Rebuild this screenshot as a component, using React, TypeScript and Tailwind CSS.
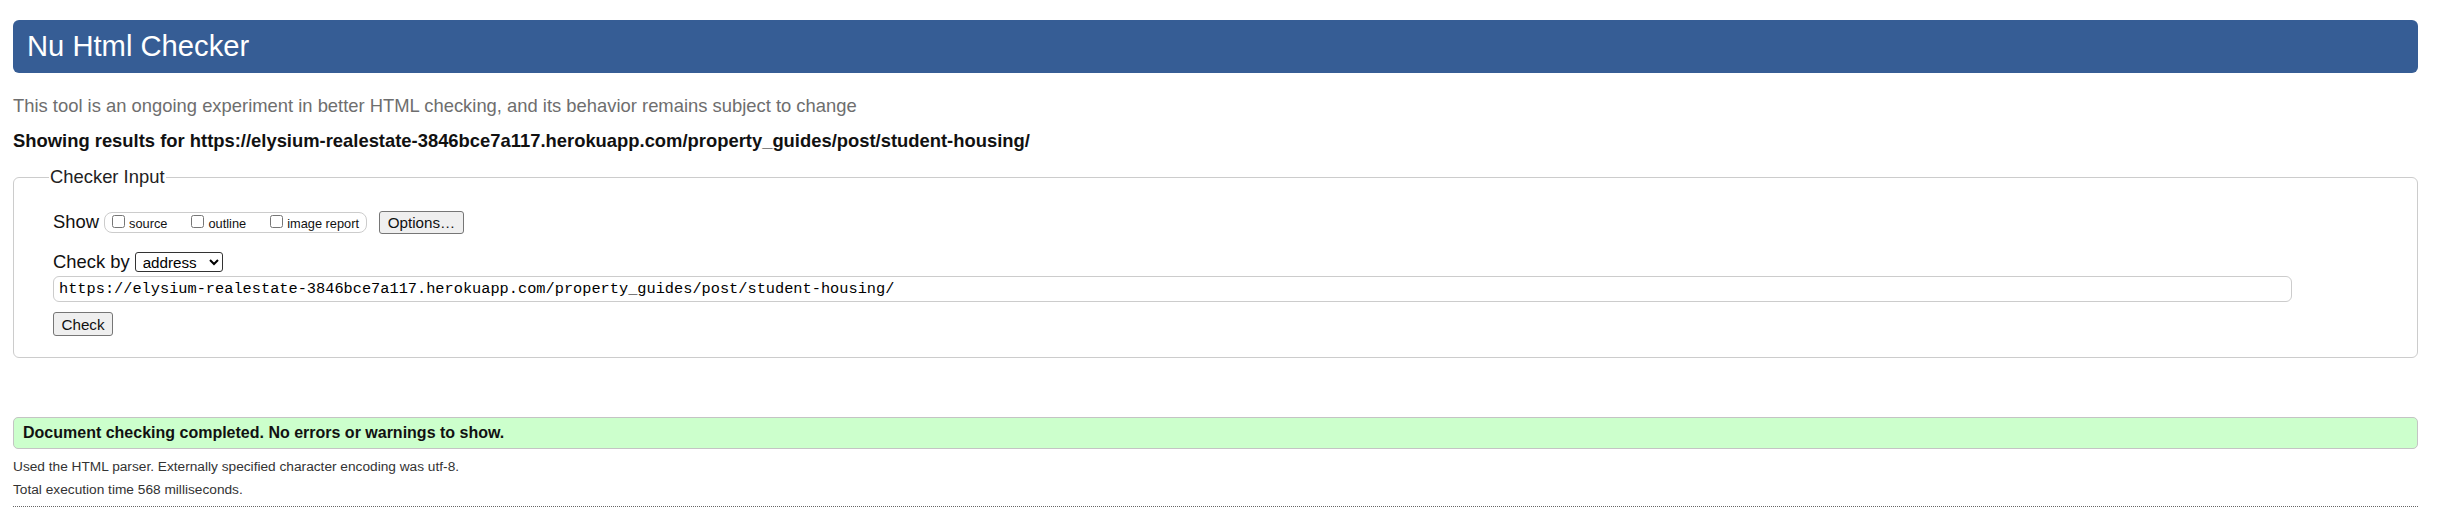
import React from 'react'

const targetUrl = 'https://elysium-realestate-3846bce7a117.herokuapp.com/property_guides/post/student-housing/'

const showOptions = ['source', 'outline', 'image report']

export default function App() {
  return (
    <div className="min-h-screen bg-white pl-[13px] pr-[19px] pt-[20px] font-['Liberation_Sans',Arial,sans-serif] text-[#111]">
      {/* Title bar */}
      <h1 className="flex h-[53px] items-center rounded-[6px] bg-[#365d95] px-[14px] text-[29.2px] font-normal leading-none text-white">
        Nu Html Checker
      </h1>

      <p className="mt-[22px] text-[18.4px] leading-[22px] text-[#6e6e6e]">
        This tool is an ongoing experiment in better HTML checking, and its behavior remains subject to change
      </p>
      <p className="mt-[13px] text-[18.4px] font-bold leading-[22px] text-[#111]">
        Showing results for {targetUrl}
      </p>

      {/* Checker input */}
      <fieldset className="mt-[15px] rounded-[6px] border border-[#cccccc] pb-[21px] pl-[35px]">
        <legend className="px-[1px] text-[18.4px] leading-[20px] text-[#222]">Checker Input</legend>
        <div className="pl-[4px] pr-[125px]">
          <div className="mt-[24px] flex items-center text-[18.4px] leading-[20px]">
            <span className="mb-[2px]">Show</span>
            <span className="ml-[5px] flex h-[21px] items-center rounded-[8px] border border-[#cccccc] pl-[7px] pr-[7px] text-[12.8px] leading-[14px]">
              {showOptions.map((opt, i) => (
                <label key={opt} className={i === 0 ? 'flex items-center' : 'ml-[24px] flex items-center'}>
                  <input type="checkbox" className="m-0 mb-[3px] mr-[4px] h-[13px] w-[13px]" />
                  <span className="mt-[2px]">{opt}</span>
                </label>
              ))}
            </span>
            <button className="ml-[12px] h-[23px] w-[85px] rounded-[3px] border border-[#767676] bg-[#efefef] text-[15.2px] leading-[17px]">
              Options…
            </button>
          </div>

          <div className="mt-[18px] flex items-baseline text-[18.4px] leading-[20px]">
            <span>Check by</span>
            <select className="ml-[5px] h-[20px] w-[88px] rounded-[3px] border border-[#333] bg-white pl-[3px] text-[15.2px] leading-[17px] text-black">
              <option>address</option>
            </select>
          </div>

          <input
            type="text"
            readOnly
            value={targetUrl}
            className="mt-[4px] block h-[26px] w-full rounded-[6px] border border-[#cccccc] px-[5px] font-['Liberation_Mono','Courier_New',monospace] text-[15.3px] text-black"
          />

          <button className="mt-[10px] block h-[24px] w-[60px] rounded-[3px] border border-[#767676] bg-[#efefef] text-[15.2px] leading-[17px]">
            Check
          </button>
        </div>
      </fieldset>

      {/* Result */}
      <div className="mt-[59px] flex h-[32px] items-center rounded-[5px] border border-[#c4c4c4] bg-[#ccffcc] px-[9px] text-[16px] font-bold text-[#111]">
        Document checking completed. No errors or warnings to show.
      </div>
      <p className="mt-[6px] text-[13.7px] leading-[23px] text-[#333]">
        Used the HTML parser. Externally specified character encoding was utf-8.
      </p>
      <p className="text-[13.7px] leading-[23px] text-[#333]">Total execution time 568 milliseconds.</p>
      <hr className="mt-[5px] border-t border-dotted border-[#666]" />
    </div>
  )
}
